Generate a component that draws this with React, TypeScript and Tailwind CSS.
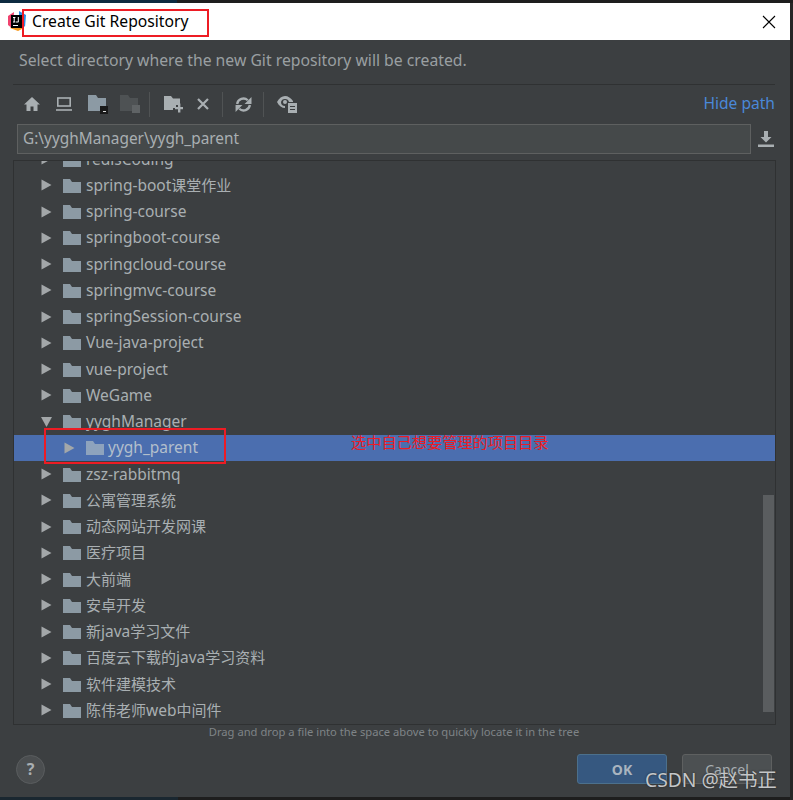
import React from "react";

const rows: { name: string; level?: number; open?: boolean; selected?: boolean }[] = [
  { name: "redisCoding" },
  { name: "spring-boot课堂作业" },
  { name: "spring-course" },
  { name: "springboot-course" },
  { name: "springcloud-course" },
  { name: "springmvc-course" },
  { name: "springSession-course" },
  { name: "Vue-java-project" },
  { name: "vue-project" },
  { name: "WeGame" },
  { name: "yyghManager", open: true },
  { name: "yygh_parent", level: 1, selected: true },
  { name: "zsz-rabbitmq" },
  { name: "公寓管理系统" },
  { name: "动态网站开发网课" },
  { name: "医疗项目" },
  { name: "大前端" },
  { name: "安卓开发" },
  { name: "新java学习文件" },
  { name: "百度云下载的java学习资料" },
  { name: "软件建模技术" },
  { name: "陈伟老师web中间件" },
];

const font = { fontFamily: '"Noto Sans", "Noto Sans CJK SC", sans-serif' };

function Folder({ className = "" }: { className?: string }) {
  return (
    <svg width="18" height="15" viewBox="0 0 18 15" className={className}>
      <path d="M0 1h7l2 3h9v11H0z" fill="currentColor" />
    </svg>
  );
}

function Arrow({ open }: { open?: boolean }) {
  return (
    <svg width="11" height="12" viewBox="0 0 11 12" className="shrink-0">
      {open ? <path d="M0 1h11L5.500 11z" fill="#a3a7a9" /> : <path d="M0.500 0.500L10.500 6 0.500 11.500z" fill="#a3a7a9" />}
    </svg>
  );
}

function Sep() {
  return <div className="w-px h-[25px] bg-[#505354]" />;
}

function Row({ name, level, open, selected }: (typeof rows)[number]) {
  const parts = name.split(/([\u4e00-\u9fff]+)/).filter(Boolean);
  return (
    <div className={`flex items-center h-[26.25px] ${level ? "pl-[50px]" : "pl-[27px]"} ${selected ? "bg-[#4b6eaf]" : ""}`}>
      <Arrow open={open} />
      <Folder className={`ml-[11px] shrink-0 ${selected ? "text-[#8ea3bd]" : "text-[#8c9aa4]"}`} />
      <span className={`${level ? "ml-[4px]" : "ml-[5px]"} text-[15.5px] whitespace-nowrap ${selected ? "text-[#b3bfcc]" : "text-[#a9afb2]"}`}>
        {parts.map((p, i) => (
          <span key={i} className={/[\u4e00-\u9fff]/.test(p) ? "text-[15px]" : ""}>{p}</span>
        ))}
      </span>
    </div>
  );
}

export default function App() {
  return (
    <div className="relative w-[793px] h-[800px] flex flex-col overflow-hidden bg-[#262626]" style={font}>
      <div className="h-[3px] flex shrink-0">
        <div className="w-[177px] bg-[#0d2a40]" />
        <div className="flex-1 bg-[#1e1e1e]" />
      </div>
      <div className="w-[790px] h-[794px] flex flex-col bg-[#3c3f41]">
        <div className="h-[37px] shrink-0 bg-white flex items-center justify-between pl-[8px] pr-[14px]">
          <div className="flex items-center">
            <svg width="18" height="20" viewBox="0 0 18 20">
              <path d="M0 5L6 1 5 18 0 14z" fill="#f0436f" />
              <path d="M11 0l7 4-1 12-6-6z" fill="#2a8fe8" />
              <path d="M2 17l8 3 6-3-8-6z" fill="#f79a1e" />
              <rect x="3" y="4" width="13" height="13" fill="#000" />
              <rect x="5" y="14" width="5" height="1" fill="#fff" />
              <rect x="5" y="6" width="2.400" height="1" fill="#fff" />
              <rect x="5.700" y="6" width="1" height="5" fill="#fff" />
              <rect x="5" y="10.500" width="2.400" height="1" fill="#fff" />
              <rect x="9.800" y="6" width="1" height="5" fill="#fff" />
              <rect x="8" y="10.500" width="2.500" height="1" fill="#fff" />
            </svg>
            <span className="ml-[6px] text-[15.7px] text-black whitespace-nowrap">Create Git Repository</span>
          </div>
          <svg width="14" height="14" viewBox="0 0 14 14" stroke="#000" strokeWidth="1.1">
            <path d="M1 1l12 12M13 1L1 13" />
          </svg>
        </div>

        <div className="h-[45px] shrink-0 mx-[13px] w-[762px] border-b border-[#2f3132] flex items-center pl-[6px] pb-[3px]">
          <span className="text-[15.75px] text-[#9a9fa2] whitespace-nowrap">Select directory where the new Git repository will be created.</span>
        </div>

        <div className="h-[39px] shrink-0 ml-[24px] mr-[15px] pb-[1px] flex items-center justify-between">
          <div className="flex items-center">
            <svg width="16" height="14" viewBox="0 0 16 14" fill="#a9afb2"><path d="M8 0L0 7.500h2.500V14h4V9.500h3V14h4V7.500H16z" /></svg>
            <svg className="ml-[16px]" width="16" height="14" viewBox="0 0 16 14" fill="none" stroke="#a9afb2" strokeWidth="1.600"><rect x="1.800" y="1" width="12.400" height="8" /><path d="M0 13h16" /></svg>
            <svg className="ml-[16px]" width="20" height="19" viewBox="0 0 20 19">
              <path d="M0 0h8l2 3h8v13H0z" fill="#8c9aa4" />
              <rect x="12" y="11" width="8" height="8" fill="#1a1a1a" />
              <rect x="15" y="16" width="3" height="1" fill="#ddd" />
            </svg>
            <svg className="ml-[12px]" width="20" height="18" viewBox="0 0 20 18">
              <path d="M0 0h8l2 3h8v13H0z" fill="#4e5254" />
              <rect x="12" y="10" width="8" height="8" fill="#5f6365" />
            </svg>
            <div className="ml-[9px]"><Sep /></div>
            <svg className="ml-[14px]" width="19" height="17" viewBox="0 0 19 17">
              <path d="M0 0h7l2 2.500h7V9h-4v3H9v2H0z" fill="#a9afb2" />
              <path d="M14 7.500h2.400V11H19v2.200h-2.600V16.500H14v-3.300h-3V11h3z" fill="#a9afb2" />
            </svg>
            <svg className="ml-[14px]" width="12" height="12" viewBox="0 0 12 12" stroke="#a9afb2" strokeWidth="2.200"><path d="M1 1l10 10M11 1L1 11" /></svg>
            <div className="ml-[13px]"><Sep /></div>
            <svg className="ml-[12px]" width="17" height="17" viewBox="0 0 16 16" fill="none" stroke="#a9afb2" strokeWidth="2.200">
              <path d="M2 7.500a6 6 0 0 1 10-3.500" />
              <path d="M14 8.500a6 6 0 0 1-10 3.500" />
              <path d="M15.500 1v6.500H9z" fill="#a9afb2" stroke="none" />
              <path d="M0.500 15V8.500H7z" fill="#a9afb2" stroke="none" />
            </svg>
            <div className="ml-[11px]"><Sep /></div>
            <svg className="ml-[13px]" width="20" height="18" viewBox="0 0 20 18">
              <path d="M0 7c2-4 5-6 8-6s6 2 8 5v1h-4a4 4 0 0 0-4-3 4 4 0 0 0-4 3 4 4 0 0 0 4 4v2c-3 0-6-2-8-6z" fill="#a9afb2" />
              <circle cx="8" cy="7" r="2" fill="#a9afb2" />
              <rect x="11" y="8" width="9" height="10" fill="#a9afb2" />
              <rect x="13" y="11" width="5" height="1" fill="#3c3f41" />
              <rect x="13" y="14" width="5" height="1" fill="#3c3f41" />
            </svg>
          </div>
          <span className="text-[15.6px] text-[#4a88d8] whitespace-nowrap">Hide path</span>
        </div>

        <div className="h-[30px] shrink-0 ml-[17px] mr-[15px] flex items-center">
          <div className="w-[734px] h-full border border-[#5e6060] bg-[#45494a] flex items-center pl-[5px]">
            <span className="text-[15.4px] text-[#a9afb2] whitespace-nowrap">G:\yyghManager\yygh_parent</span>
          </div>
          <svg className="ml-[7px]" width="16" height="16" viewBox="0 0 16 16" fill="#a9afb2">
            <path d="M6 0h4v6h3.500L8 11.500 2.500 6H6z" />
            <rect y="13.500" width="16" height="2.500" />
          </svg>
        </div>

        <div className="relative h-[565px] shrink-0 mt-[6px] mx-[13px] w-[763px] border border-[#2f3132] overflow-hidden">
          <div className="-mt-[15px]">
            {rows.map((r) => (
              <Row key={r.name} {...r} />
            ))}
          </div>
          <div className="absolute right-[1px] top-[334px] w-[11px] h-[217px] bg-[#5a5d5f]" />
        </div>

        <div className="text-center text-[11.2px] text-[#7f8487] mt-[1px] h-[17px] leading-[12px] pr-[2px]">
          Drag and drop a file into the space above to quickly locate it in the tree
        </div>

        <div className="flex items-center justify-between ml-[16px] mr-[18px] mt-[11px]">
          <div className="w-[29px] h-[29px] rounded-full border border-[#5a5d5f] bg-[#4b4e50] flex items-center justify-center text-[16px] font-bold text-[#a9afb2]">?</div>
          <div className="flex gap-[15px]">
            <div className="w-[90px] h-[30px] rounded-[3px] border border-[#4c708c] bg-[#365880] flex items-center justify-center text-[14px] font-bold text-[#a9b4bf]">OK</div>
            <div className="w-[90px] h-[30px] rounded-[3px] border border-[#5e6060] bg-[#4c5052] flex items-center justify-center text-[14px] text-[#a9afb2]">Cancel</div>
          </div>
        </div>
      </div>

      <div className="h-[3px] flex shrink-0">
        <div className="w-[178px] bg-[#1a2730]" />
        <div className="flex-1 bg-[#1e1e1e]" />
      </div>
      <div className="absolute right-0 top-[3px] w-[3px] h-[797px] bg-[#262626]" />

      <div className="absolute left-[22px] top-[9px] w-[187px] h-[28px] border-2 border-[#ed1c24]" />
      <div className="absolute left-[44px] top-[428px] w-[182px] h-[36px] border-2 border-[#ed1c24]" />
      <div className="absolute left-[351px] top-[432px] text-[15.2px] leading-[18px] text-[#ed1c24] whitespace-nowrap" style={{ fontFamily: '"Noto Sans CJK SC", sans-serif' }}>选中自己想要管理的项目目录</div>
      <div className="absolute left-[645px] top-[767px] text-[19.3px] leading-[26px] text-[#c4c6c8] whitespace-nowrap" style={{ textShadow: "0 0 2px #222" }}>CSDN @赵书正</div>
    </div>
  );
}
